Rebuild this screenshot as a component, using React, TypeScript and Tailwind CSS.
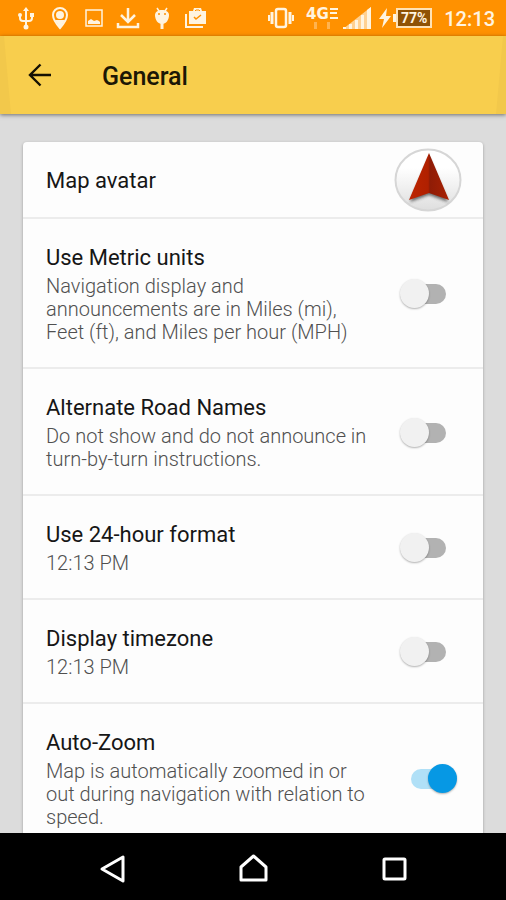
import type { ReactNode } from "react";

type Setting = {
    id: string;
    title: string;
    description: string;
    enabled: boolean;
};

const settings: Setting[] = [
    {
        id: "metric-units",
        title: "Use Metric units",
        description: "Navigation display and announcements are in Miles (mi), Feet (ft), and Miles per hour (MPH)",
        enabled: false,
    },
    {
        id: "road-names",
        title: "Alternate Road Names",
        description: "Do not show and do not announce in turn-by-turn instructions.",
        enabled: false,
    },
    { id: "hour-format", title: "Use 24-hour format", description: "12:13 PM", enabled: false },
    { id: "timezone", title: "Display timezone", description: "12:13 PM", enabled: false },
    {
        id: "auto-zoom",
        title: "Auto-Zoom",
        description: "Map is automatically zoomed in or out during navigation with relation to speed.",
        enabled: true,
    },
];

function StatusIcon({ children }: { children: ReactNode }) {
    return (
        <svg viewBox="0 0 24 24" className="h-6 w-6 shrink-0" fill="none" stroke="#fff4e0" strokeWidth="2">
            {children}
        </svg>
    );
}

function StatusBar() {
    return (
        <div className="flex h-9 shrink-0 items-center justify-between bg-[#ff9100] pl-[14px] pr-[11px] text-[#fff4e0]">
            <div className="flex items-center gap-[10px]">
                {/* usb */}
                <StatusIcon>
                    <path d="M12 4v17M6 9v3c0 2 1 3 3 3h6c2 0 3-1 3-3V9" />
                    <path d="M12 1l3 4H9zM16 7h4v4h-4z" fill="#fff4e0" stroke="none" />
                    <circle cx="6" cy="9" r="2" fill="#fff4e0" stroke="none" />
                    <circle cx="12" cy="21" r="2.5" fill="#fff4e0" stroke="none" />
                </StatusIcon>
                {/* location */}
                <StatusIcon>
                    <path d="M12 2a7 7 0 0 0-7 7c0 5 7 13 7 13s7-8 7-13a7 7 0 0 0-7-7z" />
                    <path d="M7 14h10l-5 8z" fill="#fff4e0" stroke="none" />
                    <circle cx="12" cy="9" r="4" fill="#fff4e0" stroke="none" />
                </StatusIcon>
                {/* screenshot */}
                <StatusIcon>
                    <path d="M4 4h16v16H4z" strokeWidth="1.5" />
                    <path d="M6 18v-3l3-2 3 2 3-1 2 1 1 1v2z" fill="#fff4e0" stroke="none" />
                </StatusIcon>
                {/* download */}
                <StatusIcon>
                    <path d="M12 2v14M5 9l7 7 7-7M2 17v4h20v-4" strokeWidth="2.5" />
                </StatusIcon>
                {/* debugging */}
                <StatusIcon>
                    <path d="M5 9c0-3 3-5 7-5s7 2 7 5c0 5-3 9-7 9s-7-4-7-9z" fill="#fff4e0" stroke="none" />
                    <path d="M7 2l2 3M17 2l-2 3" strokeWidth="1.5" />
                    <path d="M12 15v8" strokeWidth="3" />
                    <circle cx="9" cy="8" r="1" fill="#ff9100" stroke="none" />
                    <circle cx="15" cy="8" r="1" fill="#ff9100" stroke="none" />
                </StatusIcon>
                {/* store updates */}
                <StatusIcon>
                    <path d="M5 5h4l1-3h7l1 3h4v13H5z" fill="#fff4e0" stroke="none" />
                    <path d="M11 5l1-1h3l1 1" stroke="#ff9100" strokeWidth="1" />
                    <path d="M2 8v13h17" strokeWidth="2" />
                    <path d="M10 11l2 2 5-4" stroke="#ff9100" strokeWidth="1.5" />
                </StatusIcon>
            </div>
            <div className="flex items-center">
                {/* vibrate */}
                <svg viewBox="0 0 28 24" className="h-6 w-7" fill="none" stroke="#fff4e0" strokeWidth="2">
                    <rect x="9" y="3" width="10" height="18" rx="2" strokeWidth="2.5" />
                    <path d="M5 6v12M23 6v12" strokeWidth="3" />
                    <path d="M2 9v6M26 9v6" />
                </svg>
                <svg viewBox="0 0 34 26" className="ml-[10px] h-[26px] w-[34px]" fill="#fff4e0">
                    <text x="1" y="14" fontSize="15" fontWeight="700" fontFamily="DejaVu Sans, sans-serif">4G</text>
                    <path d="M25 3h8v2h-8zM25 7h7v2h-7zM25 12h8v2h-8z" />
                    <path d="M9 17h3v7H9zM22 17h3v7h-3z" opacity="0.35" />
                </svg>
                {/* signal strength */}
                <svg viewBox="0 0 28 22" className="ml-1 h-[22px] w-7" fill="#fff4e0">
                    <path d="M0 22l28-22v22z" opacity="0.65" />
                    <path d="M0 22v-2h3v2zM6 22v-5h3v5zM12 22V13h3v9zM18 22V8h3v14zM24 22V3l4-3v22z" />
                </svg>
                <svg viewBox="0 0 12 20" className="ml-2 h-5 w-3" fill="#fff4e0">
                    <path d="M8 0L0 11h5l-2 9 9-12H7z" />
                </svg>
                <svg viewBox="0 0 3 8" className="ml-[2px] h-2 w-[3px]" fill="#fff4e0">
                    <path d="M0 0h3v8H0z" />
                </svg>
                <span className="flex h-5 w-9 items-center justify-center border-2 border-[#ffe2b5] bg-[#8f5205] text-[14px] font-bold leading-none">
                    77%
                </span>
                <span className="ml-3 pt-[2px] text-[20px] font-medium leading-6">12:13</span>
            </div>
        </div>
    );
}

function AppBar() {
    return (
        <header className="relative z-10 flex h-[78px] shrink-0 items-center bg-[#f8ce4d] px-6 shadow-[0_1px_4px_rgba(0,0,0,0.5)]">
            <svg viewBox="0 0 11 78" className="absolute left-0 top-0 h-full w-[11px]" fill="#f2c84b">
                <path d="M0 0h4l7 78H0z" />
            </svg>
            <svg viewBox="0 0 11 78" className="absolute right-0 top-0 h-full w-[11px]" fill="#f2c84b">
                <path d="M11 0H8L1 78h10z" />
            </svg>
            <button type="button" aria-label="Back" className="flex h-8 w-8 items-center justify-center">
                <svg viewBox="0 0 24 24" className="h-6 w-6" fill="none" stroke="#151103" strokeWidth="2.4">
                    <path d="M23 12H2M12.500 1.500L2 12l10.500 10.500" />
                </svg>
            </button>
            <h1 className="ml-[46px] pt-[3px] text-[25px] font-medium leading-8 text-[#1c1705]">General</h1>
        </header>
    );
}

function Avatar() {
    return (
        <svg viewBox="0 0 68 64" className="h-16 w-[68px]">
            <defs>
                <linearGradient id="disc" x1="0" y1="0" x2="0" y2="1">
                    <stop offset="0.3" stopColor="#ffffff" />
                    <stop offset="1" stopColor="#dedede" />
                </linearGradient>
                <linearGradient id="arrow" x1="0" y1="0" x2="1" y2="0">
                    <stop offset="0" stopColor="#bd2400" />
                    <stop offset="0.48" stopColor="#b02000" />
                    <stop offset="0.52" stopColor="#8f1c06" />
                    <stop offset="1" stopColor="#a82103" />
                </linearGradient>
                <filter id="soft" x="-20%" y="-20%" width="140%" height="140%">
                    <feGaussianBlur stdDeviation="1.500" />
                </filter>
            </defs>
            <ellipse cx="34" cy="32" rx="32.500" ry="30.500" fill="url(#disc)" stroke="#d6d6d6" strokeWidth="2" />
            <path d="M35 10l19 44-19-7-19 7z" fill="#333" opacity="0.7" filter="url(#soft)" />
            <path d="M35 5l20 47-20-7-20 7z" fill="url(#arrow)" />
        </svg>
    );
}

function SettingRow({ id, title, description, enabled }: Setting) {
    return (
        <li className="flex items-center border-b-2 border-[#ececec] pb-[23px] pl-[23px] pr-[26px] pt-[25px]">
            <div className="min-w-0 flex-1 pr-6">
                <label htmlFor={id} className="block text-[22px] leading-7 text-[#161616]">
                    {title}
                </label>
                <p className="mt-[3px] text-[20px] font-light leading-[23px] text-[#505050]">{description}</p>
            </div>
            <input
                id={id}
                type="checkbox"
                role="switch"
                defaultChecked={enabled}
                className="relative h-[30px] w-[58px] shrink-0 appearance-none before:absolute before:left-3 before:top-[5px] before:h-5 before:w-[35px] before:rounded-full before:bg-[#b2b2b2] after:absolute after:left-[1px] after:top-0 after:h-[29px] after:w-[29px] after:rounded-full after:bg-[#f1f1f1] after:shadow-[0_1px_2px_rgba(0,0,0,0.3)] checked:before:bg-[#b0e0f7] checked:after:left-[29px] checked:after:bg-[#0698e4]"
            />
        </li>
    );
}

function NavigationBar() {
    return (
        <nav className="flex h-[67px] shrink-0 items-center justify-center gap-[109px] bg-black pt-1">
            <button type="button" aria-label="Back" className="h-8 w-8">
                <svg viewBox="0 0 32 32" className="h-8 w-8" fill="none" stroke="#fff" strokeWidth="3" strokeLinejoin="round">
                    <path d="M27 4v24L6 16z" />
                </svg>
            </button>
            <button type="button" aria-label="Home" className="h-8 w-8">
                <svg viewBox="0 0 32 32" className="h-8 w-8" fill="none" stroke="#fff" strokeWidth="3" strokeLinejoin="round">
                    <path d="M4 27V14L16.500 3 29 14v13z" />
                </svg>
            </button>
            <button type="button" aria-label="Recent apps" className="h-8 w-8">
                <svg viewBox="0 0 32 32" className="h-8 w-8" fill="none" stroke="#fff" strokeWidth="3">
                    <rect x="6" y="6" width="21" height="20" rx="1" />
                </svg>
            </button>
        </nav>
    );
}

export default function App() {
    return (
        <div className="flex h-screen flex-col overflow-hidden bg-[#dcdcdc] font-['Roboto',sans-serif]">
            <StatusBar />
            <AppBar />
            <main className="min-h-0 flex-1 overflow-hidden px-[23px] pt-7">
                <ul className="rounded bg-[#fdfdfd] shadow-[0_1px_3px_rgba(0,0,0,0.3)]">
                    <li className="flex h-[77px] items-center justify-between border-b-2 border-[#ececec] pl-[23px] pr-[21px]">
                        <span className="pt-[3px] text-[22px] leading-7 text-[#161616]">Map avatar</span>
                        <Avatar />
                    </li>
                    {settings.map((setting) => (
                        <SettingRow key={setting.id} {...setting} />
                    ))}
                </ul>
            </main>
            <NavigationBar />
        </div>
    );
}
